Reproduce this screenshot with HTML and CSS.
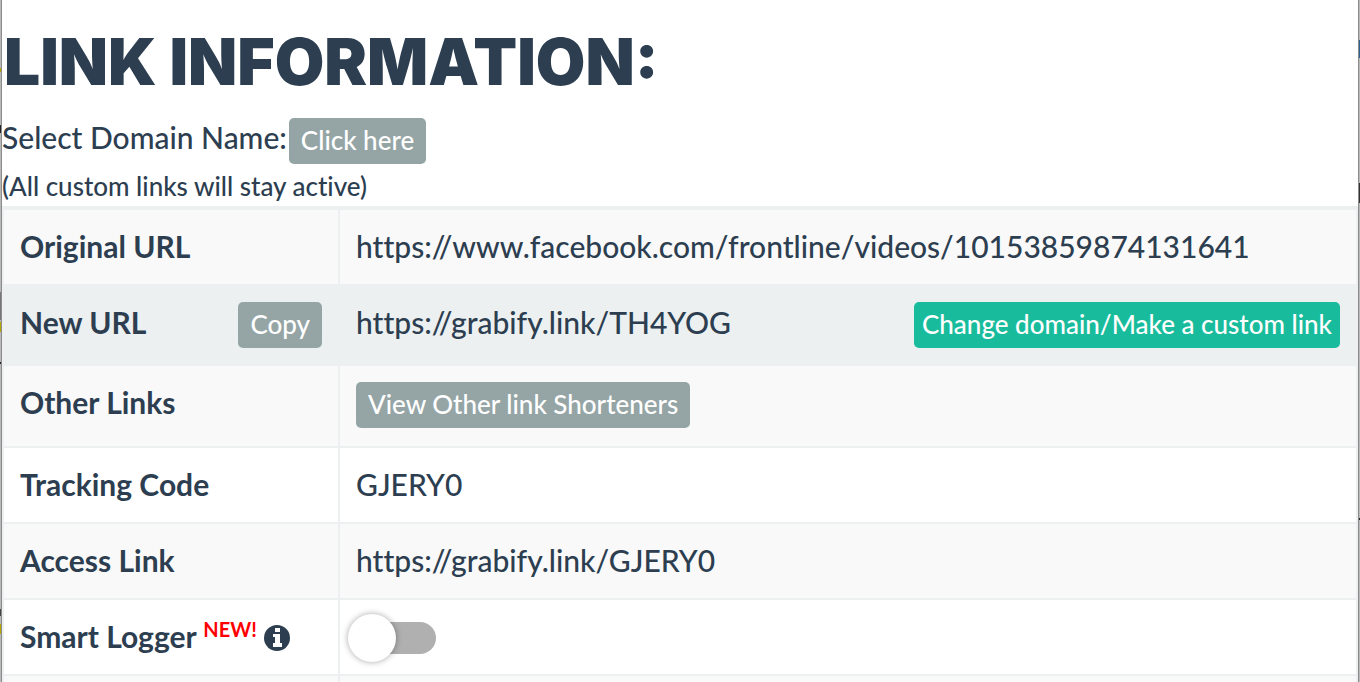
FILE: index.html
```html
<!DOCTYPE html>
<html lang="en">
<head>
	<meta charset="UTF-8">
	<title>Link Information</title>
	<link rel="stylesheet" href="styles.css">
</head>
<body>
	<main class="page">
		<h1>LINK INFORMATION:</h1>
		<div class="domain">
			<span>Select Domain Name:</span>
			<button type="button" class="btn">Click here</button>
		</div>
		<p class="note">(All custom links will stay active)</p>

		<table class="info">
			<tr>
				<th scope="row">Original URL</th>
				<td>https://www.facebook.com/frontline/videos/10153859874131641</td>
			</tr>
			<tr class="active">
				<th scope="row">
					<div class="cell">New URL <button type="button" class="btn">Copy</button></div>
				</th>
				<td>
					<div class="cell">https://grabify.link/TH4YOG <button type="button" class="btn btn-green">Change domain/Make a custom link</button></div>
				</td>
			</tr>
			<tr class="other">
				<th scope="row">Other Links</th>
				<td><div class="cell"><button type="button" class="btn">View Other link Shorteners</button></div></td>
			</tr>
			<tr>
				<th scope="row">Tracking Code</th>
				<td>GJERY0</td>
			</tr>
			<tr>
				<th scope="row">Access Link</th>
				<td>https://grabify.link/GJERY0</td>
			</tr>
			<tr>
				<th scope="row">
					<label for="smart">Smart Logger <sup>NEW!</sup></label>
					<svg class="icon" viewBox="0 0 26 26" aria-hidden="true">
						<circle cx="13" cy="13" r="13" fill="#2c3e50"/>
						<path d="M11 3h5v4h-5zM9 9h7v9h2v4H9v-4h2v-6H9z" fill="#fff"/>
					</svg>
				</th>
				<td><input type="checkbox" id="smart" class="switch"></td>
			</tr>
			<tr>
				<th scope="row"></th>
				<td></td>
			</tr>
		</table>
	</main>
</body>
</html>
```
FILE: styles.css
```css
*{box-sizing: border-box;}

/* page behind the panel, only its edges show */
body{
	height: 100vh;
	margin: 0;
	padding: 0 1px;
	background:
		linear-gradient(#b5a800, #b5a800) 0 68px / 1px 4px no-repeat,
		linear-gradient(#222, #222) 0 125px / 1px 8px no-repeat,
		linear-gradient(#777, #777) 0 292px / 1px 28px no-repeat,
		linear-gradient(#b5a800, #b5a800) 0 322px / 1px 10px no-repeat,
		linear-gradient(#222, #222) 0 362px / 1px 2px no-repeat,
		linear-gradient(#444, #444) 0 609px / 1px 7px no-repeat,
		linear-gradient(#b5a800, #b5a800) 0 624px / 1px 10px no-repeat,
		linear-gradient(#2d6090, #2d6090) 100% 40px / 1px 18px no-repeat,
		linear-gradient(#333, #333) 100% 183px / 1px 20px no-repeat,
		linear-gradient(#222, #222) 100% 518px / 1px 2px no-repeat,
		#b8b8b8;
	color: #2c3e50;
	font: 500 30px/42px Lato, "Liberation Sans", sans-serif;
	font-variant-ligatures: none;
	overflow: hidden;
}

.page{
	height: 100vh;
	border-left: 1px solid #8c8c8c;
	border-right: 1px solid #8c8c8c;
	background-color: #fff;
	overflow: hidden;
}

h1{
	margin: 0;
	padding: 24px 0 18px 2px;
	font: 900 64px/76px Inter, Lato, sans-serif;
}

.domain{
	display: flex;
	gap: 2px;
	height: 46px;
	line-height: 38px;
}

.btn{
	height: 46px;
	padding: 0 12px 2px;
	border: none;
	border-radius: 5px;
	background-color: #95a5a6;
	color: #fff;
	font: 500 26px/44px Lato, "Liberation Sans", sans-serif;
	cursor: pointer;
}
.btn-green{
	padding: 0 8px 2px;
	background-color: #18bc9c;
}

.note{
	margin: 0;
	padding: 4px 0 2px;
	font-size: 26px;
	line-height: 36px;
}

.info{
	width: 100%;
	table-layout: fixed;
	border-collapse: collapse;
	border: 2px solid #ecf0f1;
	border-top-width: 4px;
}
.info th,
.info td{
	height: 76px;
	padding: 16px;
	border: 2px solid #ecf0f1;
	text-align: left;
	vertical-align: top;
	line-height: 40px;
}
.info th{width: 336px;}
.info tr:first-child th,
.info tr:first-child td{
	height: 77px;
	border-top-width: 4px;
}
.info tr:nth-child(odd){background-color: #f9f9f9;}
.info .active{background-color: #ecf0f1;}
.info .other td{height: 82px;}

.cell{
	display: flex;
	justify-content: space-between;
	height: 46px;
}

sup{
	color: #f00;
	font-size: 20px;
	line-height: 0;
}

.icon{
	width: 26px;
	height: 26px;
	vertical-align: -3px;
}

.switch{
	appearance: none;
	display: block;
	position: relative;
	width: 80px;
	height: 32px;
	margin: 6px 0 0;
	border-radius: 16px;
	background-color: #b0b0b0;
	cursor: pointer;
}
.switch::before{
	content: "";
	position: absolute;
	top: -8px;
	left: -8px;
	width: 48px;
	height: 48px;
	border-radius: 50%;
	background-color: #fff;
	box-shadow: 0 0 6px rgba(0, 0, 0, .35);
}
.switch:checked{background-color: #18bc9c;}
.switch:checked::before{left: 40px;}
```
